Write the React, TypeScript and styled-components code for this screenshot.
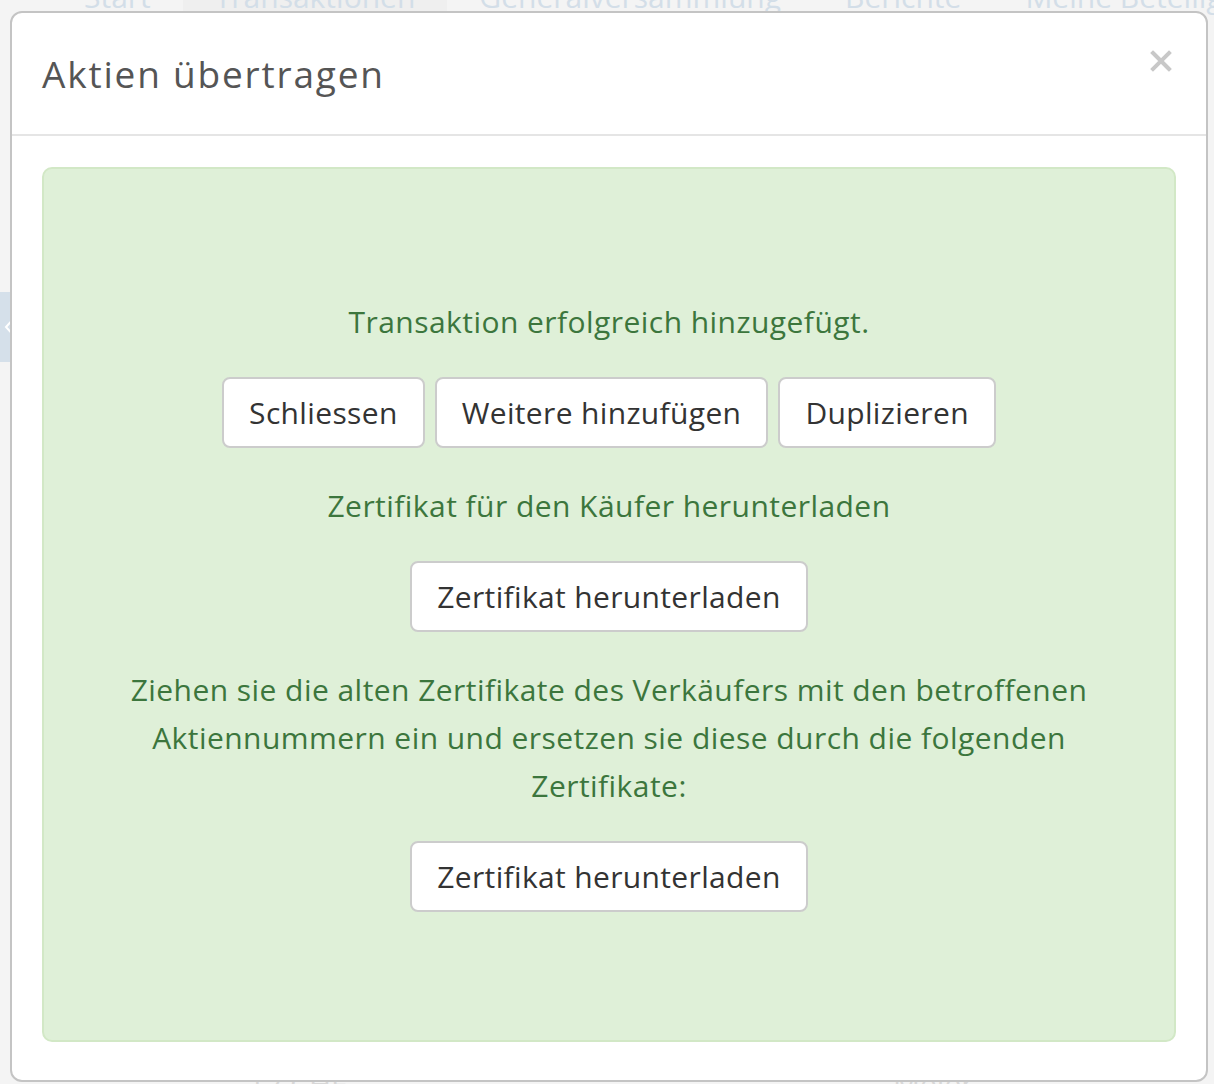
import React from "react";
import styled, { createGlobalStyle } from "styled-components";

const Global = createGlobalStyle`
  html, body { margin: 0; padding: 0; background: #f4f4f4; }
  body { font-family: "Open Sans", Lato, sans-serif; overflow: hidden; }
  * { box-sizing: border-box; }
`;

const Page = styled.div`
  width: 1214px;
  height: 1084px;
  position: relative;
  overflow: hidden;
  background: #f4f4f4;
  color: #d6d6d6;
`;

const Nav = styled.nav`
  display: flex;
  align-items: center;
  height: 44px;
  margin-top: -26px;
  padding-left: 52px;
  font-size: 30px;
  color: #d3dee8;
`;

const NavItem = styled.div<{ $active?: boolean }>`
  padding: 0 32px;
  height: 44px;
  display: flex;
  align-items: center;
  background: ${(p) => (p.$active ? "#efefef" : "transparent")};
  white-space: nowrap;
`;

const SideToggle = styled.div`
  width: 40px;
  height: 70px;
  margin: 274px 0 0 -20px;
  background: #d5e0ea;
  color: #fff;
  display: flex;
  align-items: center;
  justify-content: flex-end;
  padding-right: 2px;
`;

const BackRow = styled.div`
  display: grid;
  grid-template-columns: 645px 1fr;
  padding: 0 0 0 248px;
  font-size: 30px;
  line-height: 40px;
  margin-top: 702px;
  color: #d8d8d8;
`;

const Overlay = styled.div`
  position: absolute;
  inset: 0;
  padding: 11px 6px 2px 10px;
  display: flex;
`;

const Modal = styled.div`
  flex: 1;
  background: #fff;
  border: 2px solid #c4c4c4;
  border-radius: 12px;
  display: flex;
  flex-direction: column;
`;

const Header = styled.div`
  display: flex;
  align-items: flex-start;
  justify-content: space-between;
  padding: 35px 30px 0 30px;
  height: 123px;
  border-bottom: 2px solid #e5e5e5;
`;

const Title = styled.h4`
  margin: 0;
  font-size: 37px;
  letter-spacing: 1.8px;
  font-weight: 400;
  color: #555;
  line-height: 52px;
`;

const Close = styled.button`
  border: none;
  background: none;
  padding: 0;
  margin-top: -7px;
  width: 30px;
  height: 40px;
  color: #c8c8c8;
  cursor: pointer;
  display: flex;
  align-items: center;
  justify-content: center;
`;

const Body = styled.div`
  padding: 31px 30px 38px 30px;
  flex: 1;
  display: flex;
`;

const Alert = styled.div`
  flex: 1;
  background: #dff0d8;
  border: 2px solid #d2e8c6;
  border-radius: 10px;
  color: #3c763d;
  display: flex;
  flex-direction: column;
  align-items: center;
  justify-content: center;
  text-align: center;
  font-size: 30px;
  line-height: 48px;
  letter-spacing: 0.45px;
`;

const Message = styled.p<{ $mt?: number }>`
  margin: ${(p) => p.$mt ?? 0}px 0 0;
  max-width: 1000px;
`;

const ButtonRow = styled.div<{ $mt?: number }>`
  display: flex;
  gap: 10px;
  justify-content: center;
  margin-top: ${(p) => p.$mt ?? 31}px;
`;

const Button = styled.button`
  height: 71px;
  padding: 0 25px;
  background: #fff;
  border: 2px solid #cccccc;
  border-radius: 8px;
  font-family: inherit;
  font-size: 30px;
  letter-spacing: 0.35px;
  color: #333;
  cursor: pointer;
`;

export default function App() {
  return (
    <>
      <Global />
      <Page>
        <Nav>
          <NavItem>Start</NavItem>
          <NavItem $active>Transaktionen</NavItem>
          <NavItem>Generalversammlung</NavItem>
          <NavItem>Berichte</NavItem>
          <NavItem>Meine Beteiligungen</NavItem>
        </Nav>
        <SideToggle>
          <svg width="14" height="26" viewBox="0 0 14 26">
            <path d="M12 2 L2 13 L12 24" fill="none" stroke="currentColor" strokeWidth="2" />
          </svg>
        </SideToggle>
        <BackRow>
          <span>12 CHF</span>
          <span>Meier</span>
        </BackRow>
        <Overlay>
          <Modal role="dialog">
            <Header>
              <Title>Aktien übertragen</Title>
              <Close aria-label="Schliessen">
                <svg width="22" height="22" viewBox="0 0 22 22">
                  <path d="M3 3 L19 19 M19 3 L3 19" stroke="currentColor" strokeWidth="4" strokeLinecap="square" />
                </svg>
              </Close>
            </Header>
            <Body>
              <Alert>
                <Message>Transaktion erfolgreich hinzugefügt.</Message>
                <ButtonRow>
                  <Button>Schliessen</Button>
                  <Button>Weitere hinzufügen</Button>
                  <Button>Duplizieren</Button>
                </ButtonRow>
                <Message $mt={34}>Zertifikat für den Käufer herunterladen</Message>
                <ButtonRow>
                  <Button>Zertifikat herunterladen</Button>
                </ButtonRow>
                <Message $mt={34}>
                  Ziehen sie die alten Zertifikate des Verkäufers mit den betroffenen Aktiennummern ein und ersetzen sie diese durch die folgenden Zertifikate:
                </Message>
                <ButtonRow>
                  <Button>Zertifikat herunterladen</Button>
                </ButtonRow>
              </Alert>
            </Body>
          </Modal>
        </Overlay>
      </Page>
    </>
  );
}
